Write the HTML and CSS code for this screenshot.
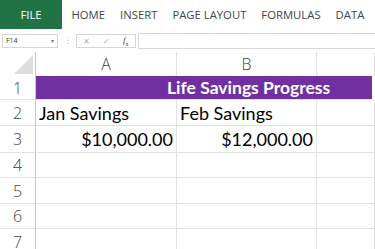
FILE: index.html
```html
<!DOCTYPE html>
<html lang="en">
<head>
    <meta charset="UTF-8">
    <meta name="viewport" content="width=device-width, initial-scale=1.0">
    <title>Life Savings Progress</title>
    <link rel="stylesheet" href="styles.css">
</head>
<body>
    <div class="ribbon">
        <div class="tab file">FILE</div>
        <div class="tab">HOME</div>
        <div class="tab">INSERT</div>
        <div class="tab">PAGE LAYOUT</div>
        <div class="tab">FORMULAS</div>
        <div class="tab">DATA</div>
    </div>

    <div class="formula-bar">
        <div class="name-box">
            <span>F14</span>
            <span class="arrow">&#9662;</span>
        </div>
        <div class="grip">&#8942;</div>
        <div class="fx-buttons">
            <span class="fx-btn">&#10005;</span>
            <span class="fx-btn">&#10003;</span>
            <span class="fx-btn fx"><i>f</i><sub>x</sub></span>
        </div>
        <div class="formula-input"></div>
    </div>

    <div class="sheet">
        <div class="corner"><span class="corner-mark"></span></div>
        <div class="col-head">A</div>
        <div class="col-head">B</div>
        <div class="col-head"></div>

        <div class="row-head">1</div>
        <div class="cell title">Life Savings Progress</div>

        <div class="row-head">2</div>
        <div class="cell">Jan Savings</div>
        <div class="cell">Feb Savings</div>
        <div class="cell"></div>

        <div class="row-head">3</div>
        <div class="cell num">$10,000.00</div>
        <div class="cell num">$12,000.00</div>
        <div class="cell"></div>

        <div class="row-head">4</div>
        <div class="cell"></div>
        <div class="cell"></div>
        <div class="cell"></div>

        <div class="row-head">5</div>
        <div class="cell"></div>
        <div class="cell"></div>
        <div class="cell"></div>

        <div class="row-head">6</div>
        <div class="cell"></div>
        <div class="cell"></div>
        <div class="cell"></div>

        <div class="row-head last">7</div>
        <div class="cell"></div>
        <div class="cell"></div>
        <div class="cell"></div>
    </div>
</body>
</html>
```

FILE: styles.css
```css
:root {
    --excel-green: #217346;
    --title-purple: #7030a0;
    --grid-line: #e1e1e1;
    --head-line: #c8c8c8;
    --head-text: #444444;
}

body {
    margin: 0;
    width: 375px;
    height: 249px;
    overflow: hidden;
    background: #ffffff;
    font-family: 'Open Sans', sans-serif;
}

/* ribbon tabs */
.ribbon {
    display: flex;
    align-items: center;
    height: 29px;
    color: var(--head-text);
    font-size: 11.3px;
    white-space: nowrap;
}

.tab {
    flex-shrink: 0;
    padding: 0 7.5px;
}

.tab.file {
    display: flex;
    align-items: center;
    justify-content: center;
    width: 62px;
    height: 29px;
    padding: 0;
    margin-right: 2px;
    background: var(--excel-green);
    color: #ffffff;
}

/* formula bar */
.formula-bar {
    display: flex;
    align-items: center;
    height: 23px;
}

.name-box {
    display: flex;
    justify-content: space-between;
    align-items: center;
    width: 56px;
    height: 14px;
    margin-left: 2px;
    padding: 0 3px;
    box-sizing: border-box;
    border: 1px solid #d6d6d6;
    font-size: 7px;
    color: #333;
}

.name-box .arrow {
    font-size: 6px;
    color: #777;
}

.grip {
    width: 18px;
    text-align: center;
    font-size: 9px;
    color: #c0c0c0;
}

.fx-buttons {
    display: flex;
    align-items: center;
    justify-content: space-around;
    width: 60px;
    height: 14px;
    box-sizing: border-box;
    border: 1px solid #d6d6d6;
    font-size: 8px;
    color: #b0b0b0;
}

.fx-btn.fx {
    color: #444;
    font-family: 'Liberation Serif', serif;
    font-size: 9px;
}

.fx-btn.fx sub {
    font-size: 6px;
}

.formula-input {
    flex: 1;
    height: 14px;
    margin-left: 2px;
    border: 1px solid #d6d6d6;
    border-right: none;
}

/* sheet grid */
.sheet {
    display: grid;
    grid-template-columns: 36px 141px 140px 1fr;
    grid-template-rows: 24px 24px 26px 27px 25px 26px 25px 26px;
}

.corner {
    display: flex;
    justify-content: flex-end;
    align-items: flex-end;
    padding: 0 2px 2px 0;
    border-right: 1px solid var(--head-line);
}

.corner-mark {
    width: 0;
    height: 0;
    border-left: 19px solid transparent;
    border-bottom: 19px solid #dcdcdc;
}

.col-head {
    display: flex;
    align-items: center;
    justify-content: center;
    border-right: 1px solid var(--grid-line);
    color: var(--head-text);
    font-size: 16px;
    font-weight: 300;
}

.row-head {
    display: flex;
    align-items: center;
    justify-content: center;
    border-right: 1px solid var(--head-line);
    border-bottom: 1px solid var(--grid-line);
    color: var(--head-text);
    font-size: 16px;
    font-weight: 300;
}

.row-head.last {
    align-items: flex-start;
    padding-top: 2px;
}

.cell {
    display: flex;
    align-items: center;
    padding: 0 3px;
    border-right: 1px solid var(--grid-line);
    border-bottom: 1px solid var(--grid-line);
    color: #000000;
    font-family: 'Lato', sans-serif;
    font-size: 18px;
    white-space: nowrap;
    overflow: hidden;
}

.cell.num {
    justify-content: flex-end;
}

.cell.title {
    grid-column: 2 / 5;
    padding-left: 131px;
    margin-right: 3px;
    background: var(--title-purple);
    color: #ffffff;
    font-size: 17.5px;
    font-weight: 700;
    border-right: none;
}
```
